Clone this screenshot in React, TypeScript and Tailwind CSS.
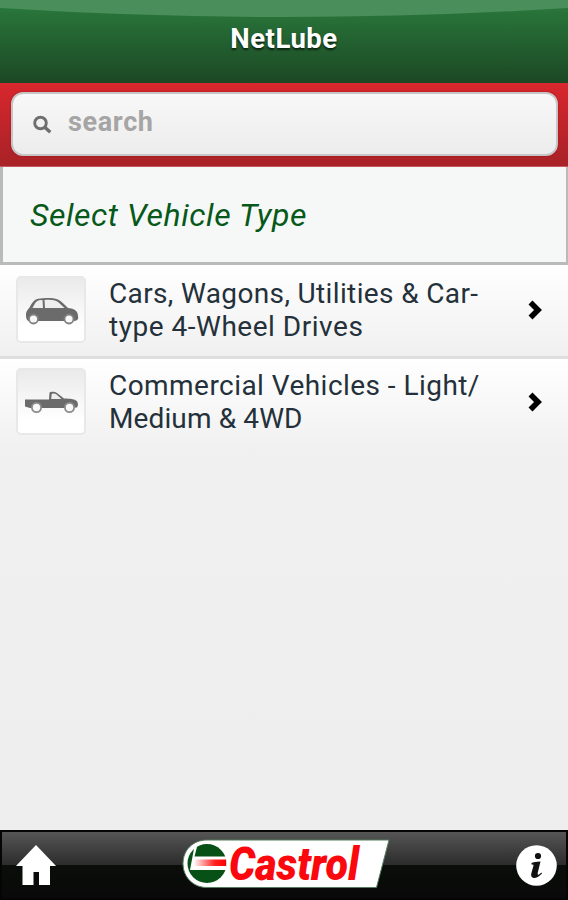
import React from 'react';

const CarIcon = () => (
  <svg width="54" height="28" viewBox="0 0 54 28" fill="none" className="block">
    <path d="M1 18 C1 14 3 12.500 4.500 10.500 C7 6 9 2.500 13 1.800 C20 .6 28 .8 33 2.500 C37 4.500 40 8 43 11 C48 11.500 52 13 52.700 17 L53.300 21 C53 23 51 24 49 24 L5 24 C2 24 1 22 1 18 Z" fill="#6b6b6b" />
    <path d="M7.500 11 C9.500 7 11 4 14 3.300 L17.500 3 L18 11 Z M19.500 3 C26 2.500 30 3 33 5 L39.500 11 L20 11 Z" fill="#eeeeee" />
    <circle cx="8.500" cy="22" r="4.500" fill="#f8f8f8" stroke="#808080" strokeWidth="1.800" />
    <circle cx="44" cy="22" r="4.500" fill="#f8f8f8" stroke="#808080" strokeWidth="1.800" />
  </svg>
);

const UteIcon = () => (
  <svg width="54" height="24" viewBox="0 0 54 24" fill="none" className="block">
    <path d="M0 8.500 L24 8.500 L24.500 1.800 C25 .3 30 .3 32 2 L39 7.500 C45 7.500 51 8 52.500 11 L53 14 L52 16.500 L39 17 L18 17 L5 17 L0 15.500 Z" fill="#6b6b6b" />
    <path d="M26.200 8 L26.700 2.900 C29 2.200 30 2.400 31.500 3.500 L36.500 8 Z" fill="#eeeeee" />
    <circle cx="11.500" cy="16.500" r="4.600" fill="#f8f8f8" stroke="#8c8c8c" strokeWidth="1.800" />
    <circle cx="44.500" cy="16.500" r="4.600" fill="#f8f8f8" stroke="#8c8c8c" strokeWidth="1.800" />
  </svg>
);

const Chevron = () => (
  <svg width="14" height="20" viewBox="0 0 14 20" className="block shrink-0">
    <path d="M2.500 2.500 L10 10 L2.500 17.500" fill="none" stroke="#000" strokeWidth="5.600" />
  </svg>
);

const SearchIcon = () => (
  <svg width="20" height="20" viewBox="0 0 20 20" fill="none" stroke="#6f6f6f" className="block">
    <circle cx="7.500" cy="8" r="5.800" strokeWidth="2.900" />
    <path d="M11.500 12 L17.300 17.300" strokeWidth="3.400" />
  </svg>
);

const HomeIcon = () => (
  <svg width="40" height="41" viewBox="0 0 40 41" fill="#fff" className="block">
    <path d="M20 0 L40 21 L34 21 L34 40 L23 40 L23 27 L17.500 27 L17.500 40 L6.500 40 L6.500 21 L0 21 Z" />
  </svg>
);

const InfoIcon = () => (
  <svg width="41" height="41" viewBox="0 0 41 41" className="block">
    <circle cx="20.500" cy="20.500" r="20.300" fill="#fff" />
    <circle cx="22" cy="11" r="3.100" fill="#111" />
    <path d="M15.500 18 Q18 16.800 24.500 16.500 L21.700 28 Q21.300 30.500 23 29.500 L25.500 27.500 L26 28.500 Q21 33.500 17.500 33 Q14.500 32 15.300 28.500 L17.500 20.500 Q17.700 19 15.500 19.500 Z" fill="#111" />
  </svg>
);

const CastrolLogo = () => (
  <svg width="208" height="50" viewBox="0 0 208 50" className="block overflow-visible">
    <defs>
      <linearGradient id="swoosh" x1="0" x2="1">
        <stop offset="0" stopColor="#fff" />
        <stop offset=".65" stopColor="#f22" />
        <stop offset="1" stopColor="#f00" />
      </linearGradient>
    </defs>
    <path d="M25 0 L207 0 L194.500 47.500 L25 47.500 C11 47.500 1 37 1 23.500 C1 10 11 0 25 0 Z" fill="#fff" stroke="#557c60" strokeWidth="1" />
    <circle cx="25" cy="23.500" r="19.500" fill="#075016" />
    <path d="M12.500 6 L15.500 5 L12.500 16.500 L44.500 16.500 L44.500 30 L8 30 Z" fill="#fff" />
    <path d="M13 19.500 L44 19.500 L44 26 L11.500 26 Z" fill="url(#swoosh)" />
    <text x="47" y="40" textLength="130" lengthAdjust="spacingAndGlyphs" fontFamily="Roboto, sans-serif" fontSize="47" fontWeight="900" fontStyle="italic" fill="#fa080e">Castrol</text>
  </svg>
);

const vehicles = [
  {
    lines: [
      { text: 'Cars, Wagons, Utilities & Car-', tracking: 'tracking-[0.36px]' },
      { text: 'type 4-Wheel Drives', tracking: 'tracking-[0.52px]' },
    ],
    icon: <CarIcon />,
  },
  {
    lines: [
      { text: 'Commercial Vehicles - Light/', tracking: 'tracking-[0.45px]' },
      { text: 'Medium & 4WD', tracking: 'tracking-[0.12px]' },
    ],
    icon: <UteIcon />,
  },
];

const App: React.FC = () => {
  return (
    <div className="flex h-[900px] w-[568px] flex-col overflow-hidden bg-[#efefef] font-['Roboto',sans-serif]">
      <header className="relative h-[83px] shrink-0 bg-linear-to-b from-[#2a7b3d] to-[#1c4824] text-center">
        <svg width="568" height="18" viewBox="0 0 568 18" className="absolute top-0 left-0">
          <path d="M0 0 H568 V8 Q284 26 0 8 Z" fill="#498e5b" />
        </svg>
        <h1 className="relative pt-[20px] text-[27.5px] leading-[38px] font-bold tracking-[0.5px] text-white [text-shadow:0_2px_2px_#0b2410]">NetLube</h1>
      </header>

      <div className="h-[84px] shrink-0 border-b border-[#c65a5d] bg-linear-to-b from-[#d8272d] to-[#a82227] px-[11px] pt-[9px]">
        <div className="flex h-[64px] w-[547px] items-center rounded-[12px] border-2 border-[#c7c5c5] bg-linear-to-b from-[#f8f8f8] to-[#ececec] pl-[20px] shadow-[0_0_2px_#9f1015]">
          <div className="pt-[2px]"><SearchIcon /></div>
          <span className="pb-[5px] pl-[15px] text-[27px] leading-[32px] font-bold tracking-[0.65px] text-[#a5a5a5]">search</span>
        </div>
      </div>

      <div className="flex h-[98px] shrink-0 items-center border-r-2 border-b-[3px] border-l-[3px] border-[#b9bbbb] bg-[#f6f8f7] pl-[27px]">
        <h2 className="text-[32px] leading-[40px] tracking-[0.54px] text-[#07581b] italic">Select Vehicle Type</h2>
      </div>

      <main className="flex-1 bg-linear-to-b from-[#f1f1f1] to-[#eeeeee]">
        {vehicles.map((v, i) => (
          <div
            key={i}
            className="flex h-[92px] border-b-[3px] border-[#dedede] bg-linear-to-b from-white to-[#f0f0f0] pt-[10px] pr-[26px] pl-[16px] first:h-[94px] first:pt-[12px] last:border-b-0"
          >
            <div className="-mt-px flex h-[67px] w-[70px] shrink-0 items-center justify-center rounded-[5px] border-2 border-[#e8e8e8] bg-linear-to-b from-[#eaeaea] to-white to-80% pt-[2px] pl-[2px]">
              {v.icon}
            </div>
            <div className="flex-1 pl-[23px] text-[28px] leading-[33px] whitespace-nowrap text-[#24313a]">
              {v.lines.map((line) => <p key={line.text} className={line.tracking}>{line.text}</p>)}
            </div>
            <div className="pt-[23px]"><Chevron /></div>
          </div>
        ))}
      </main>

      <footer className="flex h-[70px] shrink-0 items-center justify-between border-2 border-[#050505] bg-[linear-gradient(#555_0%,#2c2c2c_50%,#0a0e0a_50%,#090909_100%)] pr-[9px] pl-[14px]">
        <HomeIcon />
        <CastrolLogo />
        <InfoIcon />
      </footer>
    </div>
  );
};

export default App;
